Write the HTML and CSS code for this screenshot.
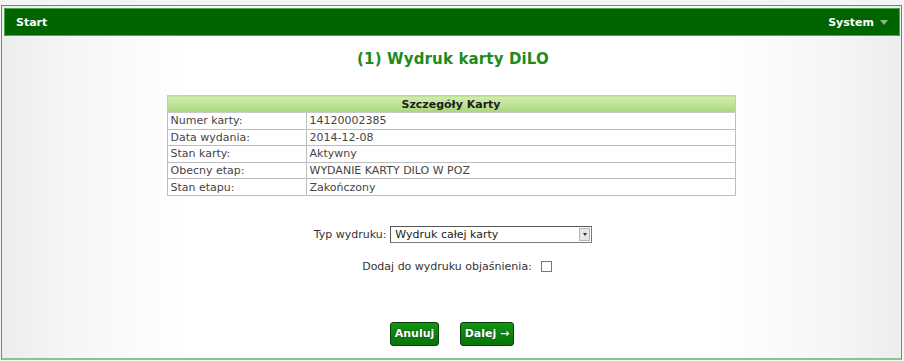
FILE: index.html
```html
<!DOCTYPE html>
<html lang="pl">
<head>
<meta charset="utf-8">
<title>Wydruk karty DiLO</title>
<link rel="stylesheet" href="styles.css">
</head>
<body>
<div class="page">
  <div class="topbar">
    <span class="nav-item">Start</span>
    <span class="nav-item nav-menu">System <span class="caret"></span></span>
  </div>
  <div class="content">
    <h1 class="title">(1) Wydruk karty DiLO</h1>
    <table class="details">
      <thead>
        <tr><th colspan="2">Szczegóły Karty</th></tr>
      </thead>
      <tbody>
        <tr><td class="lbl">Numer karty:</td><td>14120002385</td></tr>
        <tr><td class="lbl">Data wydania:</td><td>2014-12-08</td></tr>
        <tr><td class="lbl">Stan karty:</td><td>Aktywny</td></tr>
        <tr><td class="lbl">Obecny etap:</td><td>WYDANIE KARTY DILO W POZ</td></tr>
        <tr><td class="lbl">Stan etapu:</td><td>Zakończony</td></tr>
      </tbody>
    </table>
    <div class="form-row row-select">
      <label class="form-label">Typ wydruku:</label>
      <div class="select">
        <span class="select-text">Wydruk całej karty</span>
        <span class="select-btn"><span class="select-arrow"></span></span>
      </div>
    </div>
    <div class="form-row row-check">
      <label class="form-label">Dodaj do wydruku objaśnienia:</label>
      <span class="checkbox"></span>
    </div>
    <div class="buttons">
      <span class="btn btn-cancel">Anuluj</span>
      <span class="btn btn-next">Dalej →</span>
    </div>
  </div>
</div>
</body>
</html>
```
FILE: styles.css
```css
html, body {
  margin: 0;
  padding: 0;
  background: #f4f4f4;
}
body {
  font-family: "DejaVu Sans", Verdana, sans-serif;
  font-size: 11px;
  color: #333;
}
.page {
  margin: 5px 2px 0 1px;
  height: 355px;
  box-sizing: border-box;
  border: 1px solid #4f9f4f;
  border-bottom: 2px solid #86c986;
  padding: 2px 1px 0 2px;
  background: linear-gradient(to right, #ededed 0%, #f6f6f6 8%, #ffffff 20%, #ffffff 80%, #f6f6f6 92%, #ededed 100%);
}
.topbar {
  height: 26px;
  background: #006400;
  border: 1px solid #4aa84a;
  display: flex;
  align-items: center;
  justify-content: space-between;
  padding: 0 11px 0 11px;
}
.nav-item {
  color: #ffffff;
  font-weight: bold;
  font-size: 11px;
  display: flex;
  align-items: center;
}
.caret {
  display: inline-block;
  width: 0;
  height: 0;
  margin-left: 6px;
  border-left: 4px solid transparent;
  border-right: 4px solid transparent;
  border-top: 5px solid #8fb38f;
}
.content {
  display: flex;
  flex-direction: column;
  align-items: center;
}
.title {
  margin: 13px 0 0;
  font-size: 15px;
  line-height: 20px;
  font-weight: bold;
  color: #1e8a1e;
  letter-spacing: 0.15px;
  padding-left: 2px;
}
.details {
  margin-top: 26px;
  width: 569px;
  border-collapse: collapse;
  background: #ffffff;
  position: relative;
  left: -1px;
}
.details th {
  height: 16px;
  padding: 0;
  border: 1px solid #c9c9c9;
  background: linear-gradient(to bottom, #d3ebb3, #a9d87c);
  color: #1c1c1c;
  font-size: 11px;
  font-weight: bold;
  text-align: center;
}
.details td {
  height: 15.6px;
  padding: 0 3px;
  border: 1px solid #bdbdbd;
  color: #444;
  font-size: 11px;
  line-height: 15px;
}
.details td.lbl {
  width: 132px;
}
.form-row {
  display: flex;
  align-items: center;
}
.row-select {
  margin-top: 30px;
  padding-left: 2px;
}
.form-label {
  color: #333;
  font-size: 11px;
  margin-right: 4px;
}
.select {
  width: 195px;
  height: 15px;
  border: 1px solid #7a7a7a;
  border-top-color: #555;
  border-left-color: #555;
  background: #fff;
  display: flex;
  align-items: center;
  justify-content: space-between;
  padding: 0 1px 0 4px;
}
.select-text {
  font-size: 11px;
  color: #222;
}
.select-btn {
  width: 9px;
  height: 11px;
  background: #e6e6e6;
  border: 1px solid #b5b5b5;
  display: flex;
  align-items: center;
  justify-content: center;
}
.select-arrow {
  width: 0;
  height: 0;
  border-left: 2px solid transparent;
  border-right: 2px solid transparent;
  border-top: 3px solid #333;
}
.row-check {
  margin-top: 17px;
  padding-left: 10px;
}
.row-check .form-label {
  margin-right: 9px;
}
.checkbox {
  width: 9px;
  height: 9px;
  border: 1px solid #777;
  background: #fff;
}
.buttons {
  margin-top: 49px;
  display: flex;
  gap: 21px;
}
.btn {
  height: 22px;
  display: flex;
  align-items: center;
  justify-content: center;
  border: 1px solid #0d3d0d;
  border-radius: 3px;
  background: linear-gradient(to bottom, #139613, #067406);
  color: #fff;
  font-weight: bold;
  font-size: 11px;
  text-shadow: 0 0 2px #033;
}
.btn-cancel {
  width: 47px;
}
.btn-next {
  width: 52px;
}
```
